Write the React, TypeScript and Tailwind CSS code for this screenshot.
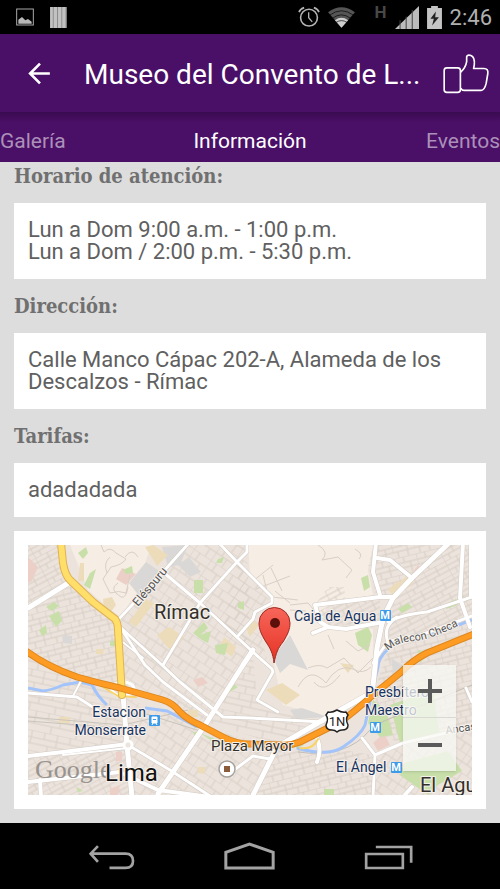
import React, { useState } from "react";
import clsx from "clsx";

interface Road {
  d: string;
  w: number;
}

interface Place {
  x: number;
  y: number;
  size: number;
  text: string;
  color: string;
  anchor?: "start" | "end";
  rotate?: number;
}

const tabs = [
  { id: "galeria", label: "Galería", align: "text-left" },
  { id: "informacion", label: "Información", align: "text-center" },
  { id: "eventos", label: "Eventos", align: "text-right" },
];

const sections = [
  { title: "Horario de atención:", lines: ["Lun a Dom 9:00 a.m. - 1:00 p.m.", "Lun a Dom / 2:00 p.m. - 5:30 p.m."] },
  { title: "Dirección:", lines: ["Calle Manco Cápac 202-A, Alameda de los Descalzos - Rímac"] },
  { title: "Tarifas:", lines: ["adadadada"] },
];

const roads: Road[] = [
  { d: "M42 37L0 63", w: 5 },
  { d: "M89 76L135 27L161 -2", w: 3 },
  { d: "M135 27L172 58L225 107L244 124L245 127L229 155L250 167", w: 3 },
  { d: "M135 120L172 58L209 17L219 7V-2", w: 3 },
  { d: "M191 -2L209 17L244 52V58L227 67L225 74L209 92", w: 3 },
  { d: "M225 105L215 120L179 177L130 249", w: 5 },
  { d: "M92 82L117 120L135 137L179 170", w: 3 },
  { d: "M92 82L134 120L152 137L195 172L222 173L295 177", w: 3 },
  { d: "M92 95L115 113", w: 2 },
  { d: "M95 150L99 200L104 252", w: 5 },
  { d: "M0 148L49 152L74 168", w: 3 },
  { d: "M45 151L53 136", w: 2 },
  { d: "M0 211L35 207L100 199", w: 4 },
  { d: "M35 210L100 203", w: 2 },
  { d: "M0 237L92 227L130 245L182 252", w: 4 },
  { d: "M12 235L13 252", w: 4 },
  { d: "M100 200L142 225L182 251", w: 3 },
  { d: "M225 250L249 202L300 172L339 150", w: 5 },
  { d: "M202 228L225 211L242 214", w: 3 },
  { d: "M289 193Q294 205 289 217", w: 4 },
  { d: "M334 193L347 210L345 252", w: 3 },
  { d: "M347 210L375 198L444 182", w: 3 },
  { d: "M375 252L384 242", w: 4 },
  { d: "M438 143L444 157", w: 3 },
  { d: "M348 -2L345 27L352 50", w: 4 },
  { d: "M349 13L362 15L384 33", w: 4 },
  { d: "M421 -2L384 33L365 53L355 73L349 103L344 150", w: 5 },
  { d: "M285 88L300 82M355 77L318 84L300 82L292 77L287 60L352 52L364 52", w: 4 },
  { d: "M360 77Q372 70 399 67L444 52", w: 3 },
  { d: "M360 97Q354 82 369 72", w: 3 },
  { d: "M345 118L358 99Q368 92 390 91L412 83L444 71", w: 3 },
  { d: "M435 -2L432 53L442 82M443 -2V52", w: 4 },
];

const rivers = [
  "M444 75L412 87Q372 90 359 105Q350 114 350 122L345 143L337 180Q333 190 315 202Q300 212 269 203",
  "M0 143L15 146Q24 145 35 140L52 137L64 140Q70 152 79 160",
  "M117 163L139 166L169 182",
];

const highway =
  "M-2 106Q20 122 49 132Q70 138 92 143L135 155Q145 158 152 167Q160 175 172 180L195 192Q208 199 222 199L252 200Q262 201 272 197L312 177Q325 168 345 150L372 128Q385 115 399 108L446 89";
const avenue = "M33 -2L35 18Q37 30 42 35L65 57L87 74Q90 78 90 85L94 150";

// neighbourhoods: outline + street pattern
const blocks = [
  { points: "0,0 33,0 42,36 0,62", grid: "url(#gridB)" },
  { points: "0,62 42,36 89,76 94,143 52,134 0,107", grid: "url(#gridA)" },
  { points: "89,76 160,0 219,0 222,105 179,177 152,167 94,143", grid: "url(#gridC)" },
  { points: "210,20 244,52 227,67 240,118 222,107 195,80", grid: "url(#gridC)" },
  { points: "0,112 94,146 99,200 0,211", grid: "url(#gridD)" },
  { points: "0,211 99,200 104,250 0,250", grid: "url(#gridB)" },
  { points: "96,152 172,182 130,250 104,250", grid: "url(#gridC)" },
  { points: "172,182 250,202 225,250 130,250", grid: "url(#gridC)" },
  { points: "179,177 225,110 229,155 250,167 300,177 250,200", grid: "url(#gridD)" },
  { points: "250,202 270,205 315,205 345,210 345,250 225,250", grid: "url(#gridA)" },
  { points: "287,60 300,42 316,42 318,56 352,52 352,76 300,82", grid: "url(#gridB)" },
  { points: "348,0 420,0 365,53 348,50 340,20", grid: "url(#gridA)" },
  { points: "420,0 444,0 444,75 360,97 365,53", grid: "url(#gridB)" },
  { points: "360,105 444,75 444,182 375,198 350,190 345,150", grid: "url(#gridA)" },
  { points: "345,210 444,182 444,250 345,250", grid: "url(#gridC)" },
];

const parks = [
  "50,8 58,2 60,8 55,14", "56,40 62,28 68,24 62,44", "18,62 26,57 31,61 24,66", "21,71 31,66 34,76 28,82",
  "11,85 18,80 19,88 14,91", "166,35 175,35 175,48 166,48", "190,14 196,12 194,18 188,18", "210,58 216,56 216,65 210,63",
  "165,88 176,77 180,83 172,90 183,86 180,98 174,95", "187,100 200,98 197,110 188,108", "82,96 87,96 87,101 82,101",
  "95,25 104,21 105,28 98,29", "327,88 340,82 344,90 340,107 330,100", "370,64 380,58 384,62 374,68",
  "333,33 340,30 342,42 336,46", "390,105 402,108 392,118", "345,155 358,165 365,190 352,192 340,178",
  "362,160 405,145 412,190 372,198", "376,218 420,206 434,226 410,240 400,250 372,230", "202,137 210,142 200,148",
  "165,187 175,186 168,197", "172,188 195,197 208,202 190,200", "268,198 276,200 268,204", "296,244 306,244 306,250 296,250",
  "92,82 98,84 96,88", "49,242 55,246 50,247", "416,60 428,54 430,60 418,64",
];

const buildings = [
  "117,2 125,0 140,10 129,21", "52,18 56,18 56,36 50,36", "75,54 84,52 88,60 82,68 76,64", "101,77 118,54 126,58 108,82",
  "129,90 141,82 156,92 143,106", "196,92 208,102 204,112 192,102", "68,104 76,104 75,109 68,109", "218,83 224,75 231,80 222,92",
  "238,145 254,138 272,150 258,160", "360,45 370,36 376,42 366,51", "372,37 380,30 385,38 378,44", "312,118 326,120 320,128",
  "160,165 170,165 170,172 160,172", "170,222 178,222 176,229 170,228", "31,172 42,172 42,178 31,178",
];

const greys = [
  "101,38 118,17 134,28 112,52", "134,2 160,0 152,20 140,22", "150,20 161,12 173,27 162,32", "245,112 262,90 280,125 262,119 252,128",
  "262,165 274,163 300,172 268,174", "363,113 374,120 378,130 366,134", "34,90 44,91 44,99 35,98",
];

const clay = [
  "0,12 10,22 4,36 0,38", "88,34 94,23 108,29 98,40", "88,207 94,207 94,216 88,216", "165,135 174,132 180,138 170,142",
  "345,198 356,188 362,200 350,206", "82,244 92,240 90,250 82,250", "386,25 390,20 394,24 390,29",
];

const contours = [
  "M73 0L76 7Q82 1 88 8L98 14Q94 20 83 22L75 34L82 48Q91 45 98 48L102 30",
  "M82 12Q75 18 79 28M97 12Q104 2 110 12M90 38Q80 44 93 52Q98 54 100 42",
  "M225 36L245 20M235 30L240 50M243 23L254 46M228 44L262 31M247 46L262 58",
  "M290 0Q302 7 294 15L310 12L324 25L318 33M327 4Q336 9 331 14",
  "M244 52L270 55M262 60L280 58L286 65M262 65L278 66",
  "M280 123Q292 118 299 123L316 113L330 128Q340 118 346 112",
  "M270 142Q282 120 298 138Q310 118 325 124Q335 130 343 122",
  "M286 137Q296 150 312 130M318 96L330 106L342 100M300 90L306 104",
];

const NAVY = "#17335f";
const INK = "#33302a";

const places: Place[] = [
  { x: 126, y: 74, size: 20, text: "Rímac", color: INK },
  { x: 77, y: 236, size: 24, text: "Lima", color: "#111111" },
  { x: 118, y: 172, size: 14, text: "Estacion", color: NAVY, anchor: "end" },
  { x: 118, y: 190, size: 14, text: "Monserrate", color: NAVY, anchor: "end" },
  { x: 183, y: 206, size: 15, text: "Plaza Mayor", color: INK },
  { x: 266, y: 76, size: 14, text: "Caja de Agua", color: NAVY },
  { x: 337, y: 152, size: 14, text: "Presbítero", color: NAVY },
  { x: 337, y: 170, size: 14, text: "Maestro", color: NAVY },
  { x: 308, y: 227, size: 14, text: "El Ángel", color: NAVY },
  { x: 392, y: 247, size: 20, text: "El Agu", color: INK },
  { x: 418, y: 189, size: 11, text: "Ancas", color: "#555555", rotate: -8 },
  { x: 110, y: 62, size: 12, text: "Eléspuru", color: "#555555", rotate: -50 },
];

const metroStops = [
  { x: 352, y: 65 },
  { x: 342, y: 177 },
  { x: 363, y: 217 },
];

function StatusBar() {
  return (
    <div className="flex h-[34px] items-center justify-between bg-black pl-4 pr-2">
      <div className="flex items-center gap-4">
        <svg viewBox="48 26 54 52" className="h-[18px] w-[18px]" aria-hidden="true">
          <rect x="50" y="28" width="50" height="48" fill="none" stroke="#a8a8a8" strokeWidth="3" />
          <path d="M55 72V60L66 52L76 62L84 58L95 66V72Z" fill="#b8b8b8" />
        </svg>
        <svg viewBox="150 20 51 64" className="h-[21px] w-[17px]" aria-hidden="true">
          <rect x="150" y="20" width="51" height="64" fill="#8c8c8c" />
          <path d="M150 20h8v64h-8zM161 20h10v64h-10zM174 20h10v64h-10zM187 20h10v64h-10z" fill="#c2c2c2" />
        </svg>
      </div>
      <div className="flex items-center gap-2">
        <svg viewBox="144 20 68 66" className="h-[22px] w-[22px]" fill="none" stroke="#b4b4b4" aria-hidden="true">
          <circle cx="178" cy="55" r="26" strokeWidth="5" />
          <path d="M177 38V55L188 68" strokeWidth="4" />
          <path d="M147 38Q151 28 163 24M193 24Q205 28 209 38" strokeWidth="5" />
        </svg>
        <svg viewBox="236 18 82 64" className="h-[21px] w-[27px]" aria-hidden="true">
          <path d="M236 34Q277 4 318 34L277 81Z" fill="#555" />
          <path d="M257 58Q277 44 297 58L277 81Z" fill="#d0d0d0" />
          <path d="M242 42Q277 17 312 42M250 52Q277 32 304 52M260 65Q277 54 294 65" fill="none" stroke="#000" strokeWidth="2" />
        </svg>
        <span className="self-start pl-3 text-[17px] font-bold leading-6 text-[#484848]">H</span>
        <svg viewBox="436 18 71 68" className="h-[23px] w-6" aria-hidden="true">
          <path d="M436 86L507 18V86Z" fill="#bcbcbc" />
          <path d="M451 60V86M469 50V86M487 30V86" stroke="#444" strokeWidth="3" />
        </svg>
        <svg viewBox="527 16 44 68" className="h-[23px] w-[15px]" aria-hidden="true">
          <path d="M527 22H539V16H559V22H571V84H527Z" fill="#c4c4c4" />
          <path d="M553 32L537 54H547L542 74L562 49H551Z" fill="#222" />
        </svg>
        <span className="pt-[2px] text-[22px] leading-8 text-[#b0b0b0]">2:46</span>
      </div>
    </div>
  );
}

function Header() {
  return (
    <header className="flex h-[78px] items-center bg-[#4a0f66] pl-[26px] pr-[10px]">
      <button type="button" aria-label="Atrás" className="mr-8 shrink-0">
        <svg viewBox="78 182 78 76" className="h-[25px] w-[26px]" fill="none" stroke="#fff" strokeWidth="8">
          <path d="M150 220H90M120 190L90 220L120 250" />
        </svg>
      </button>
      <h1 className="flex-1 whitespace-nowrap pt-1 text-[28px] leading-9 text-white">Museo del Convento de L...</h1>
      <button type="button" aria-label="Me gusta" className="shrink-0">
        <svg viewBox="578 158 144 124" className="h-[41px] w-12" fill="none" stroke="#fff" strokeWidth="5" strokeLinejoin="round">
          <rect x="584" y="203" width="49" height="74" rx="8" />
          <path d="M634 216C646 205 650 196 652 184V170C653 162 664 163 670 169C677 177 677 188 673 205H704C714 205 717 210 716 220L711 250C708 262 703 271 696 271H645C639 271 636 268 634 264" />
        </svg>
      </button>
    </header>
  );
}

function MetroIcon({ x, y }: { x: number; y: number }) {
  return (
    <g className="font-[Roboto,sans-serif]">
      <rect x={x} y={y} width="11" height="11" rx="1" fill="#3d9be9" />
      <text x={x + 5} y={y + 9} fontSize="11" fontWeight="700" fill="#fff" textAnchor="middle">
        M
      </text>
    </g>
  );
}

function CityMap() {
  return (
    <svg
      viewBox="0 0 444 250"
      preserveAspectRatio="xMidYMid slice"
      className="block h-[250px] w-full"
      role="img"
      aria-label="Mapa de ubicación"
    >
      <defs>
        <pattern id="gridA" width="22" height="17" patternUnits="userSpaceOnUse" patternTransform="rotate(-14)">
          <path d="M0 0H22M0 6H22M0 11H22M0 0V11M9 0V6M15 6V17M5 11V17" stroke="#d6cdc5" fill="none" />
        </pattern>
        <pattern id="gridB" width="24" height="15" patternUnits="userSpaceOnUse" patternTransform="rotate(-28)">
          <path d="M0 0H24M0 5H24M0 10H24M0 0V15M13 0V10M7 10V15" stroke="#d6cdc5" fill="none" />
        </pattern>
        <pattern id="gridC" width="20" height="18" patternUnits="userSpaceOnUse" patternTransform="rotate(34)">
          <path d="M0 0H20M0 9H20M0 0V18M7 0V9M13 9V18" stroke="#d8cfc7" fill="none" />
        </pattern>
        <pattern id="gridD" width="26" height="20" patternUnits="userSpaceOnUse" patternTransform="rotate(12)">
          <path d="M0 0H26M0 7H26M0 13H26M4 0V7M17 0V13M9 13V20" stroke="#d8cfc7" fill="none" />
        </pattern>
        <linearGradient id="pin" x1="0" y1="0" x2="0" y2="1">
          <stop offset="0" stopColor="#f7665a" />
          <stop offset="1" stopColor="#e53224" />
        </linearGradient>
        <path id="malecon" d="M360 106Q368 97 387 96Q403 94 430 81" />
      </defs>

      <rect width="444" height="250" fill="#ece4dc" />
      <path d="M42 0H125L119 12L109 47L92 72L69 53L60 45Z" fill="#f6ede5" />
      <path d="M220 0H345L340 25L345 50L300 58L292 80L345 84L345 120L342 150L300 172L255 160L247 125L240 66L246 52L222 28Z" fill="#f6ede5" />
      {blocks.map((b) => (
        <polygon key={b.points} points={b.points} fill={b.grid} />
      ))}
      {greys.map((p) => (
        <polygon key={p} points={p} fill="#d9d8d6" />
      ))}
      {buildings.map((p) => (
        <polygon key={p} points={p} fill="#eddcba" />
      ))}
      {clay.map((p) => (
        <polygon key={p} points={p} fill="#ecd0c8" />
      ))}
      {parks.map((p) => (
        <polygon key={p} points={p} fill="#c8dfaa" />
      ))}
      {contours.map((d) => (
        <path key={d} d={d} fill="none" stroke="#d9cfc7" />
      ))}
      <path d="M0 172L95 180L160 165M0 176L90 183M115 168L172 186" fill="none" stroke="#c9c4bb" strokeWidth="1" />
      <path d="M270 207Q318 214 342 185L356 176L444 140" fill="none" stroke="#c2beb8" strokeWidth="1" />
      {rivers.map((d) => (
        <path key={d} d={d} fill="none" stroke="#a3c3fb" strokeWidth="3" />
      ))}

      <g fill="none" strokeLinejoin="round" strokeLinecap="round">
        {roads.map((r) => (
          <path key={r.d} d={r.d} stroke="#d2cac3" strokeWidth={r.w + 1} />
        ))}
        {roads.map((r) => (
          <path key={r.d} d={r.d} stroke="#fff" strokeWidth={r.w} />
        ))}
        <ellipse cx="95" cy="144" rx="11" ry="7" stroke="#fff" strokeWidth="3" />
        <path d="M73 141L90 151L108 152M272 203Q285 205 290 194" stroke="#f9d368" strokeWidth="2" />
        <path d={avenue} stroke="#dfb257" strokeWidth="8" />
        <path d={avenue} stroke="#ffdf69" strokeWidth="6" />
        <path d={highway} stroke="#dc8620" strokeWidth="7" />
        <path d={highway} stroke="#fd9b22" strokeWidth="5" />
      </g>
      <circle cx="100" cy="200" r="4" fill="#ece4dc" stroke="#fff" strokeWidth="3" />

      <text x="7" y="233" fontSize="26" fill="#8b8783" className="font-['Liberation_Serif',serif]" opacity="0.85">
        Google
      </text>
      <g className="font-[Roboto,sans-serif]" stroke="#f6f1ec" strokeWidth="2" strokeLinejoin="round" paintOrder="stroke">
        {places.map((p) => (
          <text
            key={p.text}
            x={p.x}
            y={p.y}
            fontSize={p.size}
            fill={p.color}
            textAnchor={p.anchor ?? "start"}
            transform={p.rotate ? `rotate(${p.rotate} ${p.x} ${p.y})` : undefined}
          >
            {p.text}
          </text>
        ))}
        <text fontSize="11" fill="#555555">
          <textPath href="#malecon">Malecon Checa</textPath>
        </text>
      </g>

      {metroStops.map((m) => (
        <MetroIcon key={m.x} x={m.x} y={m.y} />
      ))}
      <g>
        <rect x="121" y="170" width="11" height="11" rx="1" fill="#3d9be9" />
        <path d="M124 172h5v6h-5zM124 180l1-2M129 180l-1-2" fill="#fff" stroke="#fff" />
        <path d="M125 174h3v1h-3z" fill="#3d9be9" />
      </g>
      <circle cx="199" cy="224" r="8" fill="#fff" stroke="#a5a19c" strokeWidth="1.5" />
      <rect x="196" y="221" width="6" height="6" fill="#8b5c3c" />

      <path
        d="M300 167Q304 168 309 165Q314 168 318 167L320 170Q317 174 320 180Q320 185 314 185Q311 185 309 187Q307 185 304 185Q298 185 298 180Q301 174 298 170Z"
        fill="#fff"
        stroke="#222"
        strokeWidth="1.5"
      />
      <text x="309" y="181" fontSize="13" fill="#222" textAnchor="middle" className="font-[Roboto,sans-serif]">
        1N
      </text>

      <path
        d="M246 118C245 108 242 103 238 97C233 89 231 84 231 78A15 15 0 0 1 262 78C262 84 260 89 255 97C250 103 248 108 246 118Z"
        fill="url(#pin)"
        stroke="#9c2a22"
      />
      <circle cx="247" cy="78" r="5" fill="#5b100c" />
    </svg>
  );
}

function ZoomControls() {
  const button = "flex h-[53px] w-full items-center justify-center";

  return (
    <div className="absolute bottom-6 right-4 w-[53px] bg-[#f8f8f4]/75 shadow-sm">
      <button type="button" aria-label="Acercar" className={clsx(button, "border-b border-[#d8d8d4]")}>
        <svg viewBox="0 0 24 24" className="h-6 w-6" stroke="#5a5a5a" strokeWidth="4">
          <path d="M12 0V24M0 12H24" />
        </svg>
      </button>
      <button type="button" aria-label="Alejar" className={button}>
        <svg viewBox="0 0 24 24" className="h-6 w-6" stroke="#5a5a5a" strokeWidth="4">
          <path d="M0 12H24" />
        </svg>
      </button>
    </div>
  );
}

function NavBar() {
  return (
    <nav className="grid h-[67px] grid-cols-3 items-center justify-items-center bg-black px-[42px]">
      <button type="button" aria-label="Volver">
        <svg viewBox="262 127 142 87" className="h-[29px] w-[47px]" fill="none" stroke="#a3a3a3" strokeWidth="8">
          <path d="M270 162H375C392 162 398 170 398 184C398 198 390 205 375 205H327M292 139L270 162L292 187" />
        </svg>
      </button>
      <button type="button" aria-label="Inicio">
        <svg viewBox="674 127 152 87" className="h-[29px] w-[51px]" fill="none" stroke="#a3a3a3" strokeWidth="9">
          <path d="M679 205V158L750 133L821 158V205Z" />
        </svg>
      </button>
      <button type="button" aria-label="Recientes">
        <svg viewBox="1097 127 146 87" className="h-[29px] w-[49px]" fill="none" stroke="#a3a3a3" strokeWidth="8">
          <path d="M1103 163H1213V205H1103ZM1132 142H1238V189" />
        </svg>
      </button>
    </nav>
  );
}

export default function App() {
  const [activeTab, setActiveTab] = useState("informacion");

  return (
    <div className="flex min-h-screen flex-col bg-[#dddddd] font-[Roboto,sans-serif]">
      <StatusBar />
      <Header />
      <div className="grid h-[50px] grid-cols-3 items-center bg-[#4a0f66] bg-linear-to-b from-[#3a0b50] to-[#4a0f66] to-20% pt-2">
        {tabs.map((tab) => (
          <button
            key={tab.id}
            type="button"
            onClick={() => setActiveTab(tab.id)}
            className={clsx("text-[21px] leading-7", tab.align, activeTab === tab.id ? "text-white" : "text-[#ab90b9]")}
          >
            {tab.label}
          </button>
        ))}
      </div>

      <main className="flex-1 px-[14px] pb-[14px]">
        {sections.map((section, index) => (
          <section key={section.title}>
            <h2
              className={clsx(
                "pb-[13px] font-['DejaVu_Serif_Condensed','DejaVu_Serif',serif] text-[20px] font-bold leading-7 text-[#707070]",
                index > 0 && "pt-[13px]"
              )}
            >
              {section.title}
            </h2>
            <div className="bg-white px-[14px] py-4 text-[22px] leading-[22px] text-[#606060]">
              {section.lines.map((line) => (
                <p key={line}>{line}</p>
              ))}
            </div>
          </section>
        ))}

        <div className="mt-[14px] bg-white p-[14px]">
          <div className="relative">
            <CityMap />
            <ZoomControls />
          </div>
        </div>
      </main>
      <NavBar />
    </div>
  );
}
